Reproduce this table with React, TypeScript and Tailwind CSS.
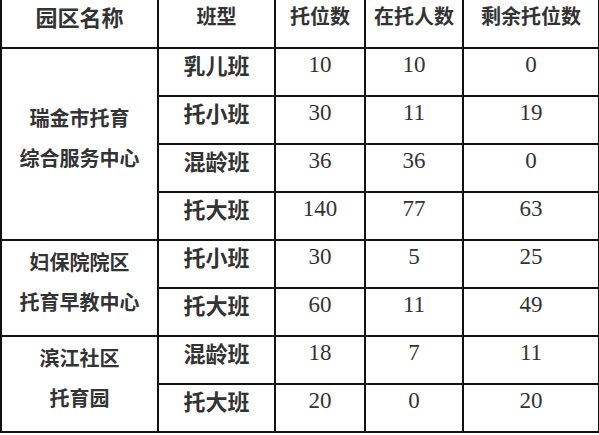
const rows = [
  { park: ["瑞金市托育", "综合服务中心"], span: 4, type: "乳儿班", total: "10", used: "10", left: "0" },
  { type: "托小班", total: "30", used: "11", left: "19" },
  { type: "混龄班", total: "36", used: "36", left: "0" },
  { type: "托大班", total: "140", used: "77", left: "63" },
  { park: ["妇保院院区", "托育早教中心"], span: 2, type: "托小班", total: "30", used: "5", left: "25" },
  { type: "托大班", total: "60", used: "11", left: "49" },
  { park: ["滨江社区", "托育园"], span: 2, type: "混龄班", total: "18", used: "7", left: "11" },
  { type: "托大班", total: "20", used: "0", left: "20" },
];

const cjk = "font-['Noto_Sans_CJK_SC',sans-serif] font-bold text-[#333]";
const num = "font-['Liberation_Serif',serif] text-[23px] text-[#333]";
const cell = "border-2 border-[#111] text-center align-middle p-0";

export default function App() {
  return (
    <div className="w-[599px] h-[435px] bg-white">
      <table className="table-fixed border-collapse w-[598px] -mt-[1px]">
        <colgroup>
          <col className="w-[157px]" />
          <col className="w-[117px]" />
          <col className="w-[90px]" />
          <col className="w-[98px]" />
          <col className="w-[136px]" />
        </colgroup>
        <thead>
          <tr className="h-[49px]">
            {["园区名称", "班型", "托位数", "在托人数", "剩余托位数"].map((h, i) => (
              <th key={h} className={`${cell} border-t-0 ${cjk} ${i === 0 ? "text-[22px]" : "text-[20px]"}`}>
                <div className="pb-[14px] leading-none">{h}</div>
              </th>
            ))}
          </tr>
        </thead>
        <tbody>
          {rows.map((r, i) => (
            <tr key={i} className="h-[48px]">
              {r.park && (
                <td rowSpan={r.span} className={`${cell} ${cjk} text-[20px]`}>
                  <div className="pb-[12px] leading-[40px]">
                    {r.park.map((p) => (
                      <div key={p}>{p}</div>
                    ))}
                  </div>
                </td>
              )}
              <td className={`${cell} ${cjk} text-[22px]`}>
                <div className="pb-[16px] leading-none">{r.type}</div>
              </td>
              {[r.total, r.used, r.left].map((v, j) => (
                <td key={j} className={`${cell} ${num}`}>
                  <div className="pb-[16px] leading-none">{v}</div>
                </td>
              ))}
            </tr>
          ))}
        </tbody>
      </table>
    </div>
  );
}
